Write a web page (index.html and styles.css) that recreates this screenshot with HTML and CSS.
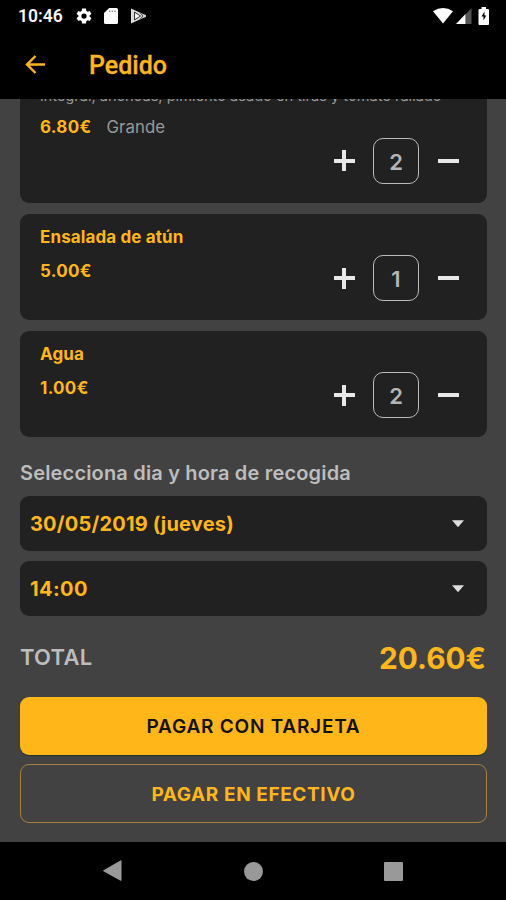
FILE: index.html
```html
<!DOCTYPE html>
<html lang="es">
<head>
<meta charset="utf-8">
<title>Pedido</title>
<link rel="stylesheet" href="styles.css">
</head>
<body>
<div class="screen">
  <header class="status">
    <span class="clock">10:46</span>
    <svg class="gear" width="18" height="18" viewBox="0 0 24 24"><path fill="#fff" fill-rule="evenodd" d="M19.4 13a7.500 7.500 0 0 0 0-2l2.600-1.800-2.300-4-2.800 1.200a7 7 0 0 0-1.800-1L14.700 2h-5.400l-.4 3.400a7 7 0 0 0-1.800 1L4.300 5.200l-2.300 4L4.600 11a7.500 7.500 0 0 0 0 2L2 14.800l2.300 4 2.800-1.200a7 7 0 0 0 1.800 1l.4 3.400h5.400l.4-3.400a7 7 0 0 0 1.800-1l2.800 1.200 2.300-4zM12 15.500a3.500 3.500 0 1 1 0-7 3.500 3.500 0 0 1 0 7z"/></svg>
    <svg class="sd" width="14" height="16" viewBox="0 0 14 16"><path fill="#fff" d="M5.200 0H12.500Q14 0 14 1.500V14.500Q14 16 12.500 16H1.500Q0 16 0 14.500V5z"/><path fill="#888" d="M5 2.500h1.300V4H5zm2.700 0H9V4H7.700zm2.700 0h1.300V4h-1.300z"/></svg>
    <svg class="play" width="17" height="16" viewBox="0 0 17 16"><path fill="#ddd" d="M1 .5 16 7.200v1.500L1 15.500z"/><path fill="none" stroke="#333" stroke-width="1" d="M4.500 4v8l6-4zM10 4.500 13 8l-3 3.500"/><path fill="#fff" d="M5.300 5.500v5L9 8z"/></svg>
    <span class="spacer"></span>
    <svg class="wifi" width="20" height="16" viewBox="0 0 20 16"><path fill="#fff" d="M0 3.200Q10-3.200 20 3.200L10 15.500z"/></svg>
    <svg class="cell" width="16" height="16" viewBox="0 0 16 16"><path fill="#555" d="M9.500 6.500 15.500 0v16h-6z"/><path fill="#fff" d="M0 16 9.500 6v10z"/></svg>
    <svg class="battery" width="12" height="18" viewBox="0 0 12 18"><path fill="#fff" d="M3.500 0h4.500v2H10.200Q11 2 11 3V17Q11 18 10 18H1.500Q.5 18 .5 17V3Q.5 2 1.500 2h2z"/><path fill="#000" d="M6.500 4.500 3.500 9.500H5.500v4L8.200 8.500H6.500z"/></svg>
  </header>
  <div class="appbar">
    <svg width="22" height="20" viewBox="0 0 22 20"><path fill="none" stroke="#ffb619" stroke-width="2.400" d="M20 9.500H2M10.500 1 2 9.500l8.500 8.500"/></svg>
    <h1>Pedido</h1>
  </div>
  <main>
    <section class="card first">
      <div class="desc">integral, anchoas, pimiento asado en tiras y tomate rallado</div>
      <div class="line"><b class="price">6.80€</b><span class="size">Grande</span></div>
      <div class="stepper"><i class="plus"></i><span class="qty">2</span><i class="minus"></i></div>
    </section>
    <section class="card">
      <div class="name">Ensalada de atún</div>
      <div class="line"><b class="price">5.00€</b></div>
      <div class="stepper"><i class="plus"></i><span class="qty">1</span><i class="minus"></i></div>
    </section>
    <section class="card third">
      <div class="name">Agua</div>
      <div class="line"><b class="price">1.00€</b></div>
      <div class="stepper"><i class="plus"></i><span class="qty">2</span><i class="minus"></i></div>
    </section>
    <h2>Selecciona dia y hora de recogida</h2>
    <div class="select"><span class="date">30/05/2019 (jueves)</span><i class="caret"></i></div>
    <div class="select"><span class="time">14:00</span><i class="caret"></i></div>
    <div class="total"><span class="label">TOTAL</span><span class="amount">20.60€</span></div>
    <div class="button card-pay"><span>PAGAR CON TARJETA</span></div>
    <div class="button cash"><span>PAGAR EN EFECTIVO</span></div>
  </main>
  <nav>
    <svg width="19" height="22" viewBox="0 0 19 22"><path fill="#999" d="M.5 10.300 17.500.5Q18.500 0 18.500 1V20Q18.500 21.200 17.500 20.700L.5 11.200Q0 10.700.5 10.300z"/></svg>
    <i class="home"></i>
    <i class="recent"></i>
  </nav>
</div>
</body>
</html>
```
FILE: styles.css
```css
* { box-sizing: border-box; }
body { margin: 0; background: #000; font-family: Inter, "Liberation Sans", sans-serif; }
.screen { width: 506px; height: 900px; display: flex; flex-direction: column; overflow: hidden; background: #000; }
.status { height: 32px; flex: none; display: flex; align-items: center; padding: 0 16px 0 18px; }
.status svg { flex: none; }
.clock { width: 57px; font: 600 17.500px/32px Roboto, sans-serif; color: #f4f4f4; white-space: nowrap; }
.gear { margin-right: 11px; }
.sd { margin-right: 12px; }
.spacer { flex: 1; }
.wifi { margin-right: 3px; }
.cell { margin-right: 6px; }
.appbar { height: 67px; flex: none; display: flex; align-items: center; padding: 0 0 2px 25px; }
h1 { margin: 2px 0 0 42px; font: 500 25px/30px Roboto, sans-serif; color: #ffb619; -webkit-text-stroke: .3px #ffb619; }
main { height: 743px; flex: none; background: #424242; padding: 0 19px 0 20px; overflow: hidden; }
.card { height: 105.500px; margin-bottom: 11.500px; padding: 13px 28px 0 20px; border-radius: 9px; background: #212121; color: #ffb619; display: flex; flex-direction: column; }
.first { height: 103.500px; padding-top: 0; border-radius: 0 0 9px 9px; }
.third { margin-bottom: 0; }
.desc { height: 16px; margin: -11.500px 0 13.500px; font-size: 14.600px; line-height: 16px; color: #999; white-space: nowrap; }
.name { height: 20px; margin-bottom: 14px; font-size: 17px; font-weight: 700; line-height: 20px; letter-spacing: .12px; white-space: nowrap; }
.line { height: 20px; display: flex; gap: 15px; font-size: 17px; line-height: 20px; }
.price { font-weight: 700; letter-spacing: .3px; }
.size { font-size: 16.800px; letter-spacing: .1px; color: #999; }
.stepper { display: flex; align-items: center; align-self: flex-end; height: 46px; margin: -26px .5px 0 0; }
.first .stepper { margin-top: .5px; }
.plus, .minus { width: 21px; height: 21px; background: linear-gradient(#e8e8e8, #e8e8e8) center / 21px 4px no-repeat; }
.plus { background: linear-gradient(#e8e8e8, #e8e8e8) center / 21px 4px no-repeat, linear-gradient(#e8e8e8, #e8e8e8) center / 4px 21px no-repeat; }
.qty { width: 46px; height: 46px; margin: 0 18.500px; border: 1.500px solid #bbb; border-radius: 10px; text-align: center; font-size: 22px; font-weight: 600; line-height: 46px; color: #b5b5b5; }
h2 { margin: 23px 0 10.500px; height: 26px; font-size: 20px; font-weight: 600; line-height: 26px; letter-spacing: .17px; color: #bdbdbd; white-space: nowrap; }
.select { height: 54.500px; margin-bottom: 10.500px; padding: 1px 23px 0 10px; border-radius: 9px; background: #212121; color: #ffb619; display: flex; align-items: center; justify-content: space-between; font-size: 20px; font-weight: 700; }
.date { letter-spacing: .2px; }
.time { letter-spacing: .4px; }
.caret { width: 12px; height: 7px; background: #ddd; clip-path: polygon(0 0, 100% 0, 50% 100%); }
.total { height: 71px; display: flex; align-items: center; justify-content: space-between; padding: 0 0 9px; }
.label { font-size: 22px; font-weight: 600; letter-spacing: .25px; color: #bdbdbd; }
.amount { margin-right: 1px; padding-top: 1px; font-size: 29.800px; font-weight: 700; color: #ffb619; }
.button { height: 57.500px; padding-top: 2px; border-radius: 9px; display: flex; align-items: center; justify-content: center; font-size: 19px; font-weight: 600; letter-spacing: .78px; }
.card-pay { background: #ffb619; color: #111; margin-bottom: 9.500px; box-shadow: 0 1px 1px #20322c; }
.cash { height: 58.500px; border: 1.500px solid #a6803c; color: #ffb619; font-weight: 700; letter-spacing: .6px; }
nav { height: 58px; flex: none; display: flex; align-items: center; padding-left: 103px; }
.home { width: 19px; height: 19px; margin-left: 122px; border-radius: 50%; background: #999; }
.recent { width: 19px; height: 19px; margin-left: 121px; border-radius: 1px; background: #999; }
```
